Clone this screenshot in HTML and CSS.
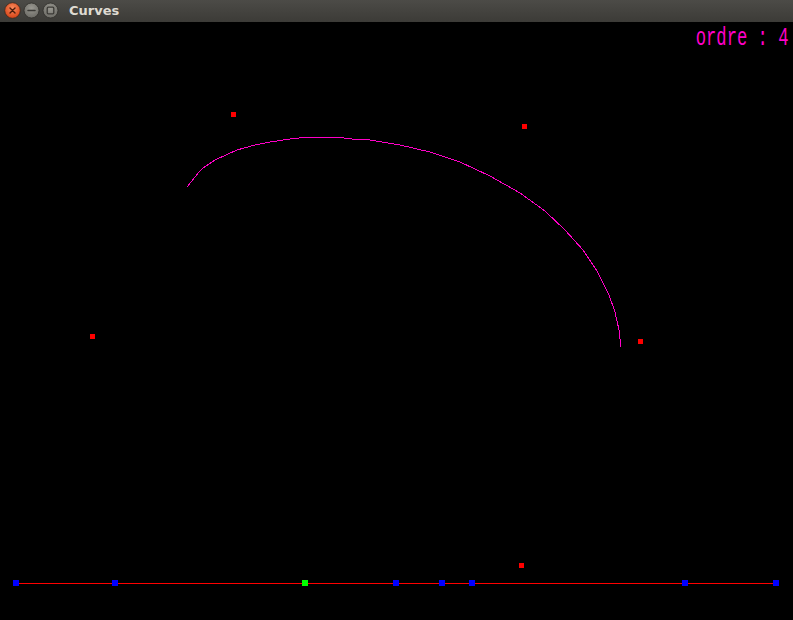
FILE: index.html
```html
<!DOCTYPE html>
<html>
<head>
<meta charset="utf-8">
<title>Curves</title>
<link rel="stylesheet" href="styles.css">
</head>
<body>
<div class="window">
  <div class="titlebar">
    <div class="buttons">
      <svg class="btn" width="17" height="17" viewBox="0 0 17 17">
        <defs>
          <radialGradient id="gc" cx="50%" cy="35%" r="60%">
            <stop offset="0" stop-color="#f88a5c"/>
            <stop offset="1" stop-color="#d9481b"/>
          </radialGradient>
        </defs>
        <circle cx="8.5" cy="8.5" r="7.8" fill="url(#gc)" stroke="#3a2a20" stroke-width="0.8"/>
        <path d="M6 6 L11 11 M11 6 L6 11" stroke="#4a1c0c" stroke-width="1.4" stroke-linecap="round"/>
      </svg>
      <svg class="btn" width="17" height="17" viewBox="0 0 17 17">
        <defs>
          <radialGradient id="gg" cx="50%" cy="35%" r="60%">
            <stop offset="0" stop-color="#9a9992"/>
            <stop offset="1" stop-color="#6f6e68"/>
          </radialGradient>
        </defs>
        <circle cx="8.5" cy="8.5" r="7.5" fill="url(#gg)" stroke="#2e2d2a" stroke-width="0.8"/>
        <path d="M5 8.5 L12 8.5" stroke="#3a3935" stroke-width="1.5" stroke-linecap="round"/>
      </svg>
      <svg class="btn" width="17" height="17" viewBox="0 0 17 17">
        <circle cx="8.5" cy="8.5" r="7.5" fill="url(#gg)" stroke="#2e2d2a" stroke-width="0.8"/>
        <rect x="5.2" y="5.2" width="6.6" height="6.6" rx="1" fill="none" stroke="#3a3935" stroke-width="1.3"/>
      </svg>
    </div>
    <span class="title">Curves</span>
  </div>
  <div class="canvas">
    <svg class="drawing" width="793" height="598" viewBox="0 22 793 598">
      <polyline class="curve" points="187,187 191,182 195,177 199,172 203,168 209,164 215,160 226,155 237,150 255,145 270,142 290,139 308,137 322,137 335,137 352,139 370,140 400,145 430,152 460,162 490,176 520,193 545,211 565,230 583,250 597,271 609,295 615,312 619,330 621,347"/>
      <rect class="cp" x="231" y="112" width="5" height="5"/>
      <rect class="cp" x="522" y="124" width="5" height="5"/>
      <rect class="cp" x="90" y="334" width="5" height="5"/>
      <rect class="cp" x="638" y="339" width="5" height="5"/>
      <rect class="cp" x="519" y="563" width="5" height="5"/>
      <rect class="axis" x="16" y="583" width="760" height="1"/>
      <rect class="knot" x="13" y="580" width="6" height="6"/>
      <rect class="knot" x="112" y="580" width="6" height="6"/>
      <rect class="knot sel" x="302" y="580" width="6" height="6"/>
      <rect class="knot" x="393" y="580" width="6" height="6"/>
      <rect class="knot" x="439" y="580" width="6" height="6"/>
      <rect class="knot" x="469" y="580" width="6" height="6"/>
      <rect class="knot" x="682" y="580" width="6" height="6"/>
      <rect class="knot" x="773" y="580" width="6" height="6"/>
    </svg>
    <div class="order">ordre : 4</div>
  </div>
</div>
</body>
</html>
```

FILE: styles.css
```css
html, body {
  margin: 0;
  padding: 0;
  background: #000;
}
.window {
  width: 793px;
  height: 620px;
  display: flex;
  flex-direction: column;
  overflow: hidden;
}
.titlebar {
  height: 22px;
  flex: 0 0 22px;
  display: flex;
  align-items: center;
  background: linear-gradient(#4c4b47, #3c3b37);
  padding-left: 4px;
  box-sizing: border-box;
}
.buttons {
  display: flex;
  gap: 2px;
  align-items: center;
  margin-top: -2px;
}
.btn {
  display: block;
}
.title {
  margin-left: 10px;
  font-family: "DejaVu Sans", sans-serif;
  font-weight: bold;
  font-size: 13px;
  color: #dfdbd2;
  margin-top: -2px;
}
.canvas {
  position: relative;
  flex: 1;
  background: #000;
}
.drawing {
  display: block;
}
.curve {
  fill: none;
  stroke: #ff00c8;
  stroke-width: 1;
  shape-rendering: crispEdges;
}
.cp {
  fill: #ff0000;
  shape-rendering: crispEdges;
}
.axis {
  fill: #ff0000;
  shape-rendering: crispEdges;
}
.knot {
  fill: #0000ff;
  shape-rendering: crispEdges;
}
.knot.sel {
  fill: #00ff00;
}
.order {
  position: absolute;
  top: 2px;
  right: 5px;
  font-family: "Liberation Mono", monospace;
  font-size: 26px;
  line-height: 28px;
  color: #ff00c8;
  transform: scaleX(0.66);
  transform-origin: right top;
  white-space: nowrap;
}
```
